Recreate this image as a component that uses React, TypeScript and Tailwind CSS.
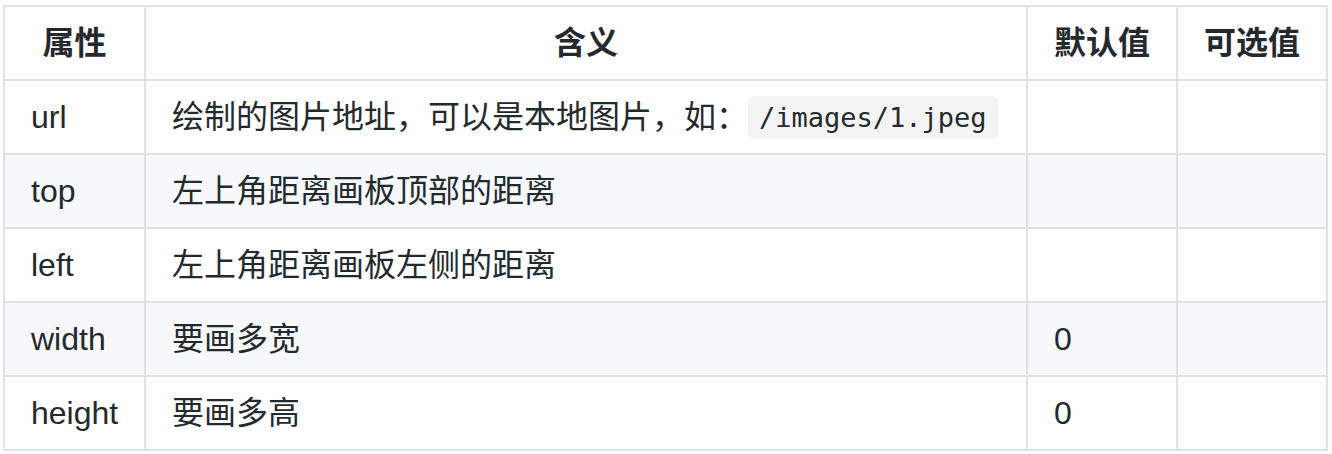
const rows = [
  { name: "url", desc: "绘制的图片地址，可以是本地图片，如：", code: "/images/1.jpeg", def: "", opt: "" },
  { name: "top", desc: "左上角距离画板顶部的距离", def: "", opt: "" },
  { name: "left", desc: "左上角距离画板左侧的距离", def: "", opt: "" },
  { name: "width", desc: "要画多宽", def: "0", opt: "" },
  { name: "height", desc: "要画多高", def: "0", opt: "" },
];

const cell = "border-2 border-[#dfe2e5] px-[26px] py-[12px] h-[74px] leading-[48px] whitespace-nowrap";

export default function App() {
  return (
    <div className="bg-white w-[1332px] h-[454px] pl-[3px] pt-[5px] text-[#24292e] font-['Liberation_Sans','Noto_Sans_CJK_SC',sans-serif] text-[32px]">
      <table className="border-collapse table-fixed w-[1323px]">
        <colgroup>
          <col className="w-[141px]" />
          <col className="w-[882px]" />
          <col className="w-[150px]" />
          <col className="w-[150px]" />
        </colgroup>
        <thead>
          <tr className="bg-white">
            <th className={`${cell} font-bold text-center`}>属性</th>
            <th className={`${cell} font-bold text-center`}>含义</th>
            <th className={`${cell} font-bold text-center`}>默认值</th>
            <th className={`${cell} font-bold text-center`}>可选值</th>
          </tr>
        </thead>
        <tbody>
          {rows.map((r, i) => (
            <tr key={r.name} className={i % 2 === 1 ? "bg-[#f6f8fa]" : "bg-white"}>
              <td className={cell}>{r.name}</td>
              <td className={cell}>
                {r.desc}
                {/* inline code chip */}
                {r.code && (
                  <code className="rounded-md bg-[#f3f3f3] px-[11px] py-[6px] leading-none align-[1px] font-['DejaVu_Sans_Mono',monospace] text-[27px]">
                    {r.code}
                  </code>
                )}
              </td>
              <td className={cell}>{r.def}</td>
              <td className={cell}>{r.opt}</td>
            </tr>
          ))}
        </tbody>
      </table>
    </div>
  );
}
